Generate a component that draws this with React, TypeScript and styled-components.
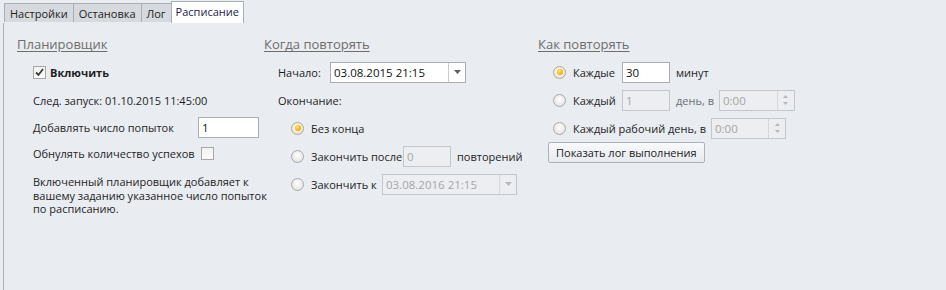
import React from "react";
import styled, { createGlobalStyle, css } from "styled-components";

const Global = createGlobalStyle`
  html, body { margin: 0; padding: 0; background: #e9ecf1; }
  body { font-family: "Open Sans", "Noto Sans", sans-serif; font-size: 11px; color: #1e1e1e; }
  * { box-sizing: border-box; }
`;

const Root = styled.div`
  width: 946px;
  height: 290px;
  display: flex;
  flex-direction: column;
  overflow: hidden;
`;

const TabStrip = styled.div`
  display: flex;
  align-items: flex-end;
  height: 23px;
  padding-left: 4px;
  background: #e9ecf1;
  position: relative;
  z-index: 1;
  margin-bottom: -1px;
`;

const Tab = styled.div<{ $active?: boolean }>`
  height: ${(p) => (p.$active ? "22px" : "19px")};
  padding: 0 ${(p) => (p.$active ? "4px" : "5px")};
  display: flex;
  align-items: center;
  font-size: 11px;
  border: 1px solid #a9aeb8;
  border-bottom: none;
  margin-right: -1px;
  background: ${(p) => (p.$active ? "#ffffff" : "#d6d9de")};
  color: ${(p) => (p.$active ? "#23234e" : "#222")};
  ${(p) => (p.$active ? css`padding-bottom: 2px;` : css`margin-bottom: 1px;`)}
`;

const Panel = styled.div`
  flex: 1;
  background: #e9ecf1;
  border-top: 1px solid #a9aeb8;
  border-left: 1px solid #a9aeb8;
  margin-left: 3px;
  display: flex;
  padding: 13px 0 0 13px;
`;

const Column = styled.div<{ $w?: number }>`
  width: ${(p) => (p.$w ? `${p.$w}px` : "auto")};
  flex: ${(p) => (p.$w ? "none" : "1")};
  display: flex;
  flex-direction: column;
`;

const Heading = styled.div`
  font-size: 13px;
  line-height: 16px;
  color: #6e6e6e;
  text-decoration: underline;
  text-underline-offset: 2px;
  margin-bottom: 6px;
`;

const Row = styled.div<{ $h?: number; $indent?: number }>`
  height: ${(p) => p.$h ?? 28}px;
  display: flex;
  align-items: center;
  padding-left: ${(p) => p.$indent ?? 0}px;
  white-space: nowrap;
`;

const Label = styled.span<{ $w?: number; $gap?: number; $bold?: boolean; $muted?: boolean }>`
  display: inline-block;
  width: ${(p) => (p.$w ? `${p.$w}px` : "auto")};
  margin-right: ${(p) => p.$gap ?? 0}px;
  font-weight: ${(p) => (p.$bold ? 700 : 400)};
  color: ${(p) => (p.$muted ? "#6f6f6f" : "inherit")};
`;

const Paragraph = styled.p`
  margin: 9px 0 0 16px;
  white-space: nowrap;
  line-height: 13.5px;
`;

const Check = styled.span<{ $gap?: number }>`
  width: 13px;
  height: 13px;
  border: 1px solid #a7a7a7;
  background: linear-gradient(#f2f2f2, #fbfbfb);
  display: inline-flex;
  align-items: center;
  justify-content: center;
  margin-right: ${(p) => p.$gap ?? 0}px;
  flex: none;
`;

const Radio = styled.span<{ $on?: boolean; $gap?: number }>`
  width: 13px;
  height: 13px;
  border-radius: 50%;
  border: 1px solid ${(p) => (p.$on ? "#b9a77a" : "#a9a9a9")};
  background: radial-gradient(circle at 50% 40%, #ffffff 0%, #e6e6e6 70%, #d2d2d2 100%);
  display: inline-flex;
  align-items: center;
  justify-content: center;
  margin-right: ${(p) => p.$gap ?? 7}px;
  flex: none;
  &::after {
    content: "";
    display: ${(p) => (p.$on ? "block" : "none")};
    width: 6px;
    height: 6px;
    border-radius: 50%;
    background: radial-gradient(circle at 40% 35%, #ffe27a, #f5b301 60%, #e29a00);
  }
`;

const Field = styled.div<{ $w: number; $disabled?: boolean; $ml?: number; $mr?: number }>`
  width: ${(p) => p.$w}px;
  height: 21px;
  border: 1px solid ${(p) => (p.$disabled ? "#c3c6cb" : "#abadb3")};
  background: ${(p) => (p.$disabled ? "#eceef1" : "#ffffff")};
  color: ${(p) => (p.$disabled ? "#a5a5a5" : "#111")};
  display: flex;
  align-items: stretch;
  margin-left: ${(p) => p.$ml ?? 0}px;
  margin-right: ${(p) => p.$mr ?? 0}px;
  flex: none;
  font-size: 11.5px;
`;

const FieldText = styled.span`
  flex: 1;
  display: flex;
  align-items: center;
  padding-left: 3px;
`;

const SideButton = styled.span<{ $disabled?: boolean }>`
  width: 17px;
  border-left: 1px solid ${(p) => (p.$disabled ? "#d3d6da" : "#c9cbd0")};
  display: flex;
  flex-direction: column;
  align-items: center;
  justify-content: center;
  gap: 4px;
  color: ${(p) => (p.$disabled ? "#b5b8bd" : "#5a5d63")};
`;

const Button = styled.div`
  height: 21px;
  margin-left: 10px;
  padding: 0 7px;
  border: 1px solid #adb2ba;
  border-radius: 2px;
  background: linear-gradient(#f8f9fb, #e7eaee);
  display: inline-flex;
  align-items: center;
  color: #222;
  align-self: flex-start;
`;

const Down = () => (
  <svg width="7" height="4" viewBox="0 0 7 4"><path d="M0 0h7L3.5 4z" fill="currentColor" /></svg>
);
const Up = () => (
  <svg width="5" height="3" viewBox="0 0 5 3"><path d="M0 3h5L2.5 0z" fill="currentColor" /></svg>
);
const SmallDown = () => (
  <svg width="5" height="3" viewBox="0 0 5 3"><path d="M0 0h5L2.5 3z" fill="currentColor" /></svg>
);

const Combo = ({ value, w, disabled, ml }: { value: string; w: number; disabled?: boolean; ml?: number }) => (
  <Field $w={w} $disabled={disabled} $ml={ml}>
    <FieldText>{value}</FieldText>
    <SideButton $disabled={disabled}><Down /></SideButton>
  </Field>
);

const Spin = ({ value, w, ml }: { value: string; w: number; ml?: number }) => (
  <Field $w={w} $disabled $ml={ml}>
    <FieldText>{value}</FieldText>
    <SideButton $disabled><Up /><SmallDown /></SideButton>
  </Field>
);

export default function App() {
  return (
    <Root>
      <Global />
      <TabStrip>
        <Tab>Настройки</Tab>
        <Tab>Остановка</Tab>
        <Tab>Лог</Tab>
        <Tab $active>Расписание</Tab>
      </TabStrip>
      <Panel>
        <Column $w={247}>
          <Heading>Планировщик</Heading>
          <Row $indent={16}>
            <Check $gap={4}>
              <svg width="9" height="9" viewBox="0 0 9 9">
                <path d="M1 4.5l2.5 2.5L8 1" stroke="#3b3b3b" strokeWidth="1.8" fill="none" />
              </svg>
            </Check>
            <Label $bold>Включить</Label>
          </Row>
          <Row $indent={16}>
            <Label>След. запуск: 01.10.2015 11:45:00</Label>
          </Row>
          <Row $indent={16} $h={26}>
            <Label $w={165}>Добавлять число попыток</Label>
            <Field $w={61}><FieldText>1</FieldText></Field>
          </Row>
          <Row $indent={16} $h={26}>
            <Label $w={168}>Обнулять количество успехов</Label>
            <Check />
          </Row>
          <Paragraph>
            Включенный планировщик добавляет к<br />
            вашему заданию указанное число попыток<br />
            по расписанию.
          </Paragraph>
        </Column>
        <Column $w={274}>
          <Heading>Когда повторять</Heading>
          <Row $indent={14}>
            <Label $w={52}>Начало:</Label>
            <Combo value="03.08.2015 21:15" w={136} />
          </Row>
          <Row $indent={14}>
            <Label>Окончание:</Label>
          </Row>
          <Row $indent={27}>
            <Radio $on />
            <Label>Без конца</Label>
          </Row>
          <Row $indent={27}>
            <Radio />
            <Label $w={92}>Закончить после</Label>
            <Field $w={48} $disabled $mr={6}><FieldText>0</FieldText></Field>
            <Label>повторений</Label>
          </Row>
          <Row $indent={27}>
            <Radio />
            <Label $w={71}>Закончить к</Label>
            <Combo value="03.08.2016 21:15" w={135} disabled />
          </Row>
        </Column>
        <Column>
          <Heading>Как повторять</Heading>
          <Row $indent={15}>
            <Radio $on />
            <Label $w={49}>Каждые</Label>
            <Field $w={48} $mr={6}><FieldText>30</FieldText></Field>
            <Label>минут</Label>
          </Row>
          <Row $indent={15}>
            <Radio />
            <Label $w={49}>Каждый</Label>
            <Field $w={48} $disabled $mr={6}><FieldText>1</FieldText></Field>
            <Label $muted>день, в</Label>
            <Spin value="0:00" w={76} ml={5} />
          </Row>
          <Row $indent={15}>
            <Radio />
            <Label>Каждый рабочий день, в</Label>
            <Spin value="0:00" w={75} ml={5} />
          </Row>
          <Row>
            <Button>Показать лог выполнения</Button>
          </Row>
        </Column>
      </Panel>
    </Root>
  );
}
